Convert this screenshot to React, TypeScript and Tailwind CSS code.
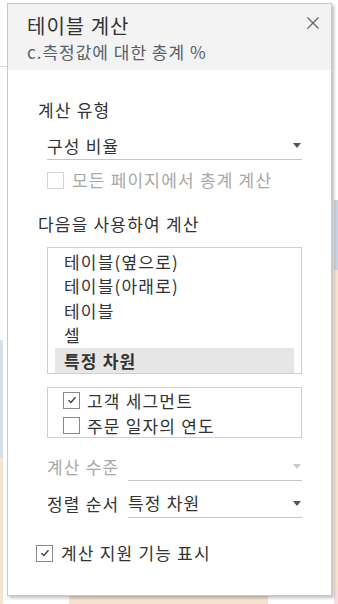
import React from "react";

const font = { fontFamily: '"Noto Sans CJK KR", "Noto Sans", sans-serif' };

function Caret({ muted }: { muted?: boolean }) {
  return (
    <svg width="8" height="5" viewBox="0 0 8 5" className="shrink-0">
      <path d="M0 0 L8 0 L4 5 Z" fill={muted ? "#c8c8c8" : "#555"} />
    </svg>
  );
}

function Check({ checked, muted }: { checked?: boolean; muted?: boolean }) {
  return (
    <span
      className={`flex h-[17px] w-[17px] shrink-0 items-center justify-center border bg-white ${
        muted ? "border-[#d4d4d4]" : "border-[#8a8a8a]"
      }`}
    >
      {checked && (
        <svg width="10" height="8" viewBox="0 0 10 8">
          <path d="M1.5 4.2 L3.9 6.5 L8.5 1.2" fill="none" stroke="#444" strokeWidth="1.5" />
        </svg>
      )}
    </span>
  );
}

function Select({ value, muted }: { value?: string; muted?: boolean }) {
  return (
    <div className="flex h-[28px] flex-1 items-center justify-between border-b border-[#c4c4c4] pr-[1px]">
      <span className="text-[17px] tracking-[1.2px] text-[#333]">{value}</span>
      <Caret muted={muted} />
    </div>
  );
}

export default function App() {
  const options = ["테이블(옆으로)", "테이블(아래로)", "테이블", "셀"];

  return (
    <div className="relative h-[604px] w-[338px] overflow-hidden bg-white" style={font}>
      {/* sheet behind the dialog */}
      <div className="absolute left-0 top-[66px] h-px w-[8px] bg-[#d9d9d9]" />
      <div className="absolute left-0 top-[340px] h-[118px] w-[3px] bg-[#d5e0ea]" />
      <div className="absolute left-0 top-[458px] h-[146px] w-[3px] bg-[#f4e3d1]" />
      <div className="absolute right-0 top-[200px] h-[70px] w-[4px] bg-[#c9d4e0]" />
      <div className="absolute right-0 top-[270px] h-[320px] w-[4px] bg-[#f4e3d1]" />
      <div className="absolute right-0 top-[590px] h-[14px] w-[4px] bg-[#f7dede]" />
      <div className="absolute bottom-0 left-[69px] h-[8px] w-[199px] bg-[#f4e3d1]" />

      <div className="relative ml-[7px] mt-[3px] flex h-[593px] w-[325px] flex-col border border-[#c9c9c9] bg-white shadow-[2px_2px_3px_rgba(0,0,0,0.25)]">
        <div className="flex h-[66px] items-start justify-between bg-[#f3f3f3] pl-[19px] pr-[12px] pt-[8px]">
          <div className="flex flex-col">
            <span className="text-[20px] leading-[28px] tracking-[1px] text-[#333]">테이블 계산</span>
            <span className="mt-[1px] text-[17px] leading-[22px] tracking-[1px] text-[#56606c]">
              c.측정값에 대한 총계 %
            </span>
          </div>
          <svg width="12" height="12" viewBox="0 0 12 12" className="mt-[5px]">
            <path d="M0.5 0.5 L11.5 11.5 M11.5 0.5 L0.5 11.5" stroke="#666" strokeWidth="1.3" />
          </svg>
        </div>

        <div className="flex flex-col pl-[30px] pr-[29px] pt-[28px] text-[17px] tracking-[1.2px] text-[#333]">
          <span className="leading-[24px]">계산 유형</span>

          <div className="ml-[9px] mt-[11px] flex flex-col">
            <Select value="구성 비율" />
            <label className="mt-[12px] flex h-[17px] items-center gap-[8px] text-[#a8a8a8]">
              <Check muted />
              모든 페이지에서 총계 계산
            </label>
          </div>

          <span className="mt-[23px] leading-[24px]">다음을 사용하여 계산</span>

          <div className="ml-[9px] mt-[11px] flex flex-col border border-[#cfcfcf] px-[7px] pt-[2px]">
            {options.map((o) => (
              <div key={o} className="h-[24.5px] pl-[9px] leading-[24px]">
                {o}
              </div>
            ))}
            <div className="h-[25px] bg-[#e6e6e6] pl-[9px] font-bold leading-[25px]">특정 차원</div>
          </div>

          <div className="ml-[9px] mt-[13px] flex flex-col gap-[8px] border border-[#cfcfcf] px-[15px] pb-[3px] pt-[4px]">
            <label className="flex h-[17px] items-center gap-[7px] leading-[17px]">
              <Check checked />
              고객 세그먼트
            </label>
            <label className="flex h-[17px] items-center gap-[7px] leading-[17px]">
              <Check />
              주문 일자의 연도
            </label>
          </div>

          <div className="ml-[9px] mt-[15px] flex items-center gap-[8px]">
            <span className="w-[73px] text-[#a8a8a8]">계산 수준</span>
            <Select muted />
          </div>

          <div className="ml-[9px] mt-[9px] flex items-center gap-[8px]">
            <span className="w-[73px]">정렬 순서</span>
            <Select value="특정 차원" />
          </div>

          <label className="-ml-[2px] mt-[27px] flex h-[17px] items-center gap-[8px]">
            <Check checked />
            계산 지원 기능 표시
          </label>
        </div>
      </div>
    </div>
  );
}
